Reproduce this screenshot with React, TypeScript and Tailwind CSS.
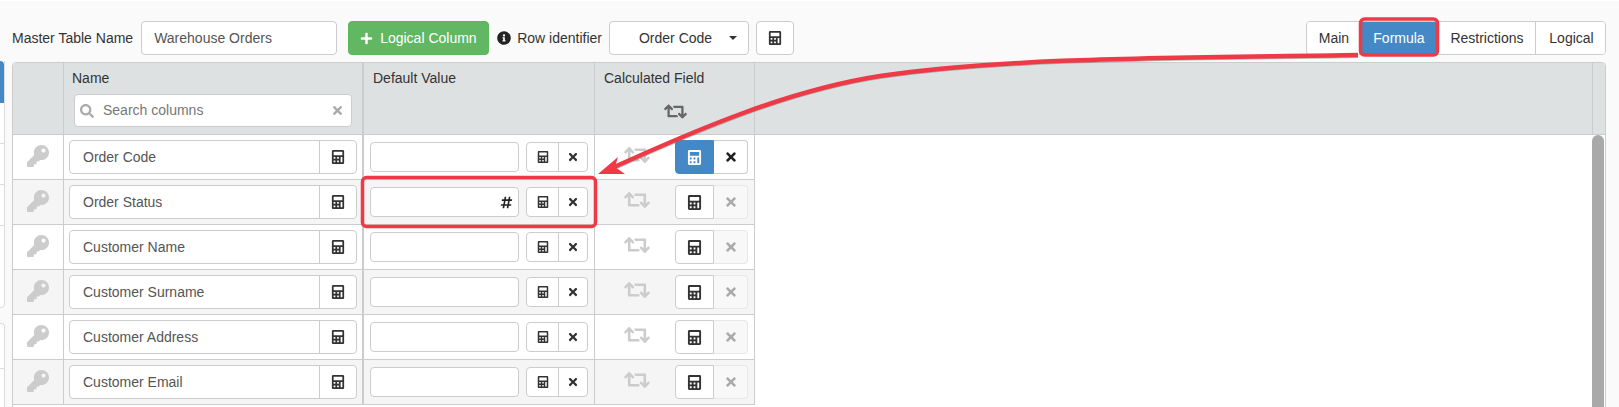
import { FaCalculator, FaHashtag, FaInfoCircle, FaKey, FaPlus, FaRetweet, FaSearch, FaTimes } from "react-icons/fa";

const rows = [
  "Order Code",
  "Order Status",
  "Customer Name",
  "Customer Surname",
  "Customer Address",
  "Customer Email",
];

function Row({ name, index }: { name: string; index: number }) {
  const first = index === 0;
  return (
    <div className={`flex h-[45px] shrink-0 border-b border-[#ccc] ${index % 2 === 1 ? "bg-[#f5f5f5]" : "bg-white"}`}>
      {/* Key */}
      <div className="flex w-[51px] items-center justify-center border-r border-[#ccc] pr-[1px] pb-[3px] text-[#ccc]">
        <FaKey size={22} />
      </div>

      {/* Name */}
      <div className="flex w-[300px] items-center border-r-2 border-[#ccc] pl-[5px]">
        <div className="flex h-[34px] w-[288px] rounded border border-[#ccc] bg-white">
          <div className="flex flex-1 items-center pl-[13px] text-[14px] text-[#555]">{name}</div>
          <div className="flex w-[37px] items-center justify-center border-l border-[#ccc] text-[#333]">
            <FaCalculator size={14} />
          </div>
        </div>
      </div>

      {/* Default value */}
      <div className="flex w-[231px] items-center border-r border-[#ccc] pl-[6px]">
        <div className="flex h-[30px] w-[149px] items-center justify-end rounded border border-[#ccc] bg-white pr-[5px] text-[#222]">
          {index === 1 && <FaHashtag size={13} />}
        </div>
        <div className="ml-[7px] flex h-[30px] w-[62px] rounded border border-[#ccc] bg-white text-[#333]">
          <div className="flex w-[32px] items-center justify-center border-r border-[#ccc]">
            <FaCalculator size={12} />
          </div>
          <div className="flex flex-1 items-center justify-center">
            <FaTimes size={12} />
          </div>
        </div>
      </div>

      {/* Calculated field */}
      <div className="flex w-[160px] items-center border-r border-[#ccc] pl-[29px]">
        <div className="flex w-[26px] justify-center pb-[4px] text-[#ccc]">
          <FaRetweet size={26} />
        </div>
        <div className="ml-[25px] flex h-[34px] w-[73px]">
          <div
            className={`flex w-[39px] items-center justify-center rounded-l border ${
              first ? "border-[#4588c6] bg-[#4588c6] text-white" : "border-[#ccc] bg-white text-[#333]"
            }`}
          >
            <FaCalculator size={15} />
          </div>
          <div
            className={`flex flex-1 items-center justify-center rounded-r border-y border-r ${
              first ? "border-[#ccc] bg-white text-[#222]" : "border-[#e8e8e8] bg-[#f8f8f8] text-[#aaa]"
            }`}
          >
            <FaTimes size={14} />
          </div>
        </div>
      </div>
    </div>
  );
}

function Tab({ label, width, active }: { label: string; width: string; active?: boolean }) {
  return (
    <div
      className={`flex items-center justify-center border-r border-[#ccc] pl-[2px] text-[14px] last:border-r-0 ${width} ${
        active ? "bg-[#4588c6] text-white" : "bg-white text-[#333]"
      }`}
    >
      {label}
    </div>
  );
}

export default function App() {
  return (
    <div className="relative flex h-[407px] w-[1619px] overflow-hidden border-t border-white bg-[#fafafa] font-['Liberation_Sans',Arial,sans-serif]">
      {/* Sidebar edge */}
      <div className="flex w-[5px] shrink-0 flex-col pt-[60px]">
        <div className="h-[247px] rounded-br border-r border-b border-[#ddd] bg-white">
          <div className="h-[42px] rounded-tr bg-[#4588c6]" />
          <div className="mt-[40px] h-[41px] border-t border-[#ddd]" />
          <div className="h-[41px] border-t border-[#ddd]" />
          <div className="h-[41px] border-t border-[#ddd]" />
        </div>
        <div className="mt-[15px] flex-1 rounded-tr border-t border-r border-[#ddd] bg-white">
          <div className="mt-[44px] border-t border-[#ddd]" />
        </div>
      </div>

      <div className="ml-[7px] w-[1594px] shrink-0 pt-[20px]">
        {/* Toolbar */}
        <div className="flex h-[34px] items-stretch text-[14px] text-[#333]">
          <div className="flex items-center">Master Table Name</div>
          <div className="ml-2 flex w-[196px] items-center rounded border border-[#ccc] bg-white pl-[12px] text-[#555]">
            Warehouse Orders
          </div>
          <div className="ml-[11px] flex w-[141px] items-center rounded border border-[#5cb85c] bg-[#62b762] pl-[11px] text-white">
            <FaPlus size={13} />
            <span className="ml-[7px]">Logical Column</span>
          </div>
          <div className="ml-2 flex items-center text-[#222]">
            <FaInfoCircle size={14} />
          </div>
          <div className="ml-1.5 flex items-center">Row identifier</div>
          <div className="ml-[7px] flex w-[140px] items-center rounded border border-[#ccc] bg-white pl-[29px] text-[#333]">
            Order Code
            <svg className="ml-[17px]" width="8" height="4" viewBox="0 0 8 4">
              <path d="M0 0h8L4 4z" fill="#333" />
            </svg>
          </div>
          <div className="ml-[7px] flex w-[38px] items-center justify-center rounded border border-[#ccc] bg-white">
            <FaCalculator size={14} />
          </div>
          <div className="ml-auto flex w-[300px] overflow-hidden rounded border border-[#ccc]">
            <Tab label="Main" width="w-[53px]" />
            <Tab label="Formula" width="w-[77px]" active />
            <Tab label="Restrictions" width="w-[99px]" />
            <Tab label="Logical" width="flex-1" />
          </div>
        </div>

        {/* Table */}
        <div className="mt-[7px] h-[400px] overflow-hidden rounded-t border border-[#ccc] bg-white text-[14px] text-[#333]">
          <div className="flex h-[72px] border-b border-[#ccc] bg-[#dee1e2]">
            <div className="w-[51px] border-r border-[#ccc]" />
            <div className="w-[300px] border-r-2 border-[#ccc] pl-[8px] pt-[5px]">
              <div className="leading-5">Name</div>
              <div className="mt-[6px] ml-[2px] flex h-[33px] w-[278px] items-center rounded border border-[#ccc] bg-white pl-[5px] pr-[7px] text-[#777]">
                <FaSearch size={14} className="text-[#aaa]" />
                <span className="ml-[9px] flex-1">Search columns</span>
                <FaTimes size={13} className="text-[#aaa]" />
              </div>
            </div>
            <div className="w-[231px] border-r border-[#ccc] pl-[9px] pt-[5px] leading-5">Default Value</div>
            <div className="w-[160px] border-r border-[#ccc] pl-[9px] pt-[5px]">
              <div className="leading-5">Calculated Field</div>
              <div className="mt-[12px] flex justify-center pr-[7px] text-[#666]">
                <FaRetweet size={23} />
              </div>
            </div>
            <div className="flex-1" />
            <div className="w-[13px] border-l border-[#ccc]" />
          </div>

          <div className="flex">
            <div className="w-[742px] shrink-0">
              {rows.map((name, i) => (
                <Row key={name} name={name} index={i} />
              ))}
            </div>
            <div className="flex-1" />
            <div className="h-[300px] w-[12px] rounded-t-[6px] bg-[#a9a9a9]" />
            <div className="w-px" />
          </div>
        </div>
      </div>

      {/* Annotations drawn over the screenshot */}
      <svg className="absolute left-0 top-[-1px]" width="1619" height="407" viewBox="0 0 1619 407" fill="none">
        <path d="M1358 56 C1180 59 1010 58 880 77 C790 91 700 129 612 169" stroke="#777" strokeWidth="4" opacity="0.5" />
        <g stroke="#ee3a46">
          <path d="M1358 55 C1180 58 1010 57 880 76 C790 90 700 128 612 168" strokeWidth="4.5" />
          <rect x="1360.5" y="19" width="77" height="36" rx="4" strokeWidth="3.5" />
          <rect x="362.5" y="177.5" width="233" height="49" rx="4" strokeWidth="3.5" />
        </g>
        <path d="M598 174 L618 157 L615 167 L625 174 Z" fill="#ee3a46" />
      </svg>
    </div>
  );
}
